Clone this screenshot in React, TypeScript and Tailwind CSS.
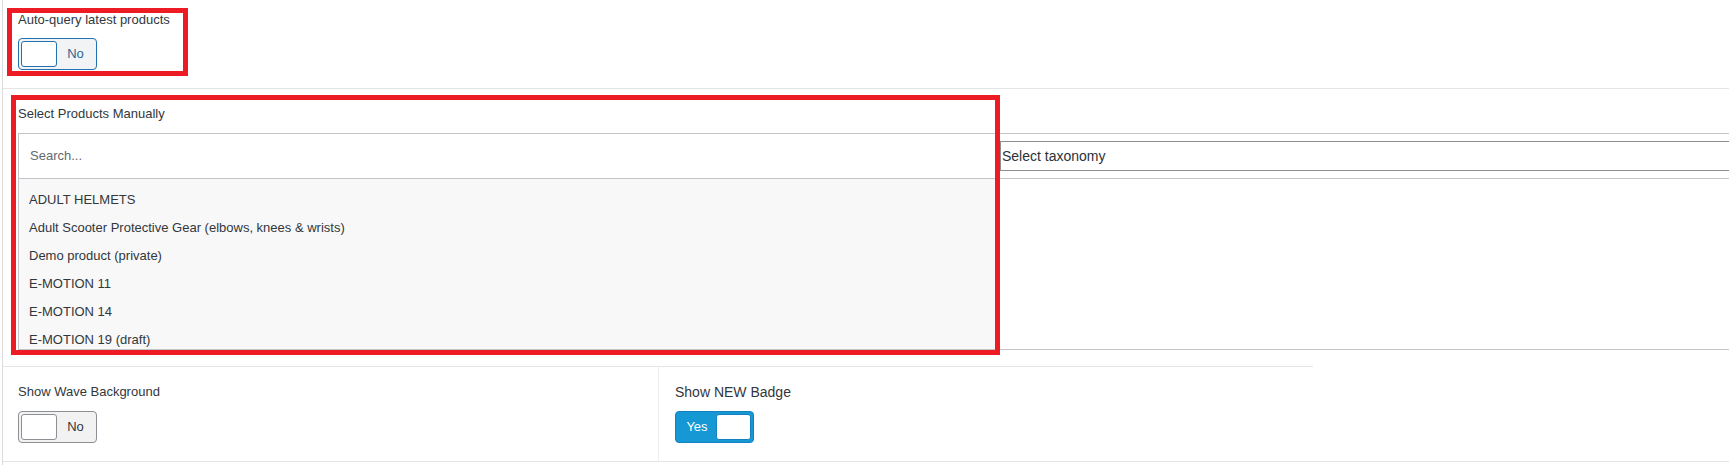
import clsx from "clsx";

const products = [
  "ADULT HELMETS",
  "Adult Scooter Protective Gear (elbows, knees & wrists)",
  "Demo product (private)",
  "E-MOTION 11",
  "E-MOTION 14",
  "E-MOTION 19 (draft)",
];

const Toggle = ({ on = false, focus = false }: { on?: boolean; focus?: boolean }) => {
  if (on) {
    return (
      <div className="flex items-center w-[79px] h-[32px] rounded-[4px] border border-[#1283c0] bg-[#1598d4] p-[2px]">
        <span className="flex-1 text-center text-white text-[13px]">Yes</span>
        <span className="h-[26px] w-[35px] rounded-[3px] border border-[#1283c0] bg-white" />
      </div>
    );
  }
  return (
    <div
      className={clsx(
        "flex items-center w-[79px] h-[32px] rounded-[4px] border p-[2px]",
        focus ? "border-[#2271b1] bg-[#f1f3f5]" : "border-[#8c8f94] bg-[#f2f2f2]"
      )}
    >
      <span
        className={clsx(
          "h-[26px] w-[36px] rounded-[3px] border bg-white",
          focus ? "border-[#2271b1]" : "border-[#8c8f94]"
        )}
      />
      <span className={clsx("flex-1 text-center text-[13px]", focus ? "text-[#2a6796]" : "text-[#32373c]")}>
        No
      </span>
    </div>
  );
};

const Label = ({ children, className }: { children: React.ReactNode; className?: string }) => (
  <p className={clsx("text-[13px] leading-[16px] text-[#32373c]", className)}>{children}</p>
);

export default function App() {
  return (
    <div className="relative w-full h-[465px] overflow-hidden bg-white font-['Liberation_Sans',Arial,sans-serif]">
      <div className="ml-[2px] h-full border-l border-[#dcdcde]">
        {/* auto query */}
        <div className="h-[89px] border-b border-[#e5e5e5] pl-[15px] pt-[12px]">
          <Label>Auto-query latest products</Label>
          <div className="mt-[10px]">
            <Toggle focus />
          </div>
        </div>

        {/* manual product picker */}
        <div className="pt-[17px] pb-[16px]">
          <Label className="pl-[15px]">Select Products Manually</Label>
          <div className="ml-[15px] mt-[11px] border-y border-l border-[#c3c4c7]">
            <div className="flex h-[45px] border-b border-[#c3c4c7]">
              <div className="w-[977px] flex items-center pl-[11px] text-[13px] text-[#646970]">Search...</div>
              <div className="flex-1 flex items-center pl-[4px]">
                <div className="w-full h-[30px] flex items-center pl-[1px] border-y border-l border-[#8c8f94] text-[14px] text-[#2c3338]">
                  Select taxonomy
                </div>
              </div>
            </div>
            <div className="flex h-[170px]">
              <ul className="w-[977px] overflow-hidden bg-[#f8f8f8] border-r border-[#c3c4c7] pt-[7px]">
                {products.map((p) => (
                  <li key={p} className="h-[28px] flex items-center pl-[10px] text-[13px] text-[#32373c]">
                    {p}
                  </li>
                ))}
              </ul>
              <div className="flex-1" />
            </div>
          </div>
        </div>

        {/* switches */}
        <div className="border-b border-[#e5e5e5]">
          <div className="grid grid-cols-[656px_1fr] w-[1310px] border-t border-[#e5e5e5]">
            <div className="border-r border-[#eeeeee] pl-[15px] pt-[17px] pb-[18px]">
              <Label>Show Wave Background</Label>
              <div className="mt-[11px]">
                <Toggle />
              </div>
            </div>
            <div className="pl-[16px] pt-[17px] pb-[18px]">
              <Label className="text-[14px]">Show NEW Badge</Label>
              <div className="mt-[11px]">
                <Toggle on />
              </div>
            </div>
          </div>
        </div>
      </div>

      {/* annotation outlines */}
      <div className="absolute left-[7px] top-[8px] w-[181px] h-[68px] border-[5px] border-[#ed1c24]" />
      <div className="absolute left-[11px] top-[95px] w-[989px] h-[260px] border-[5px] border-[#ed1c24]" />
    </div>
  );
}
